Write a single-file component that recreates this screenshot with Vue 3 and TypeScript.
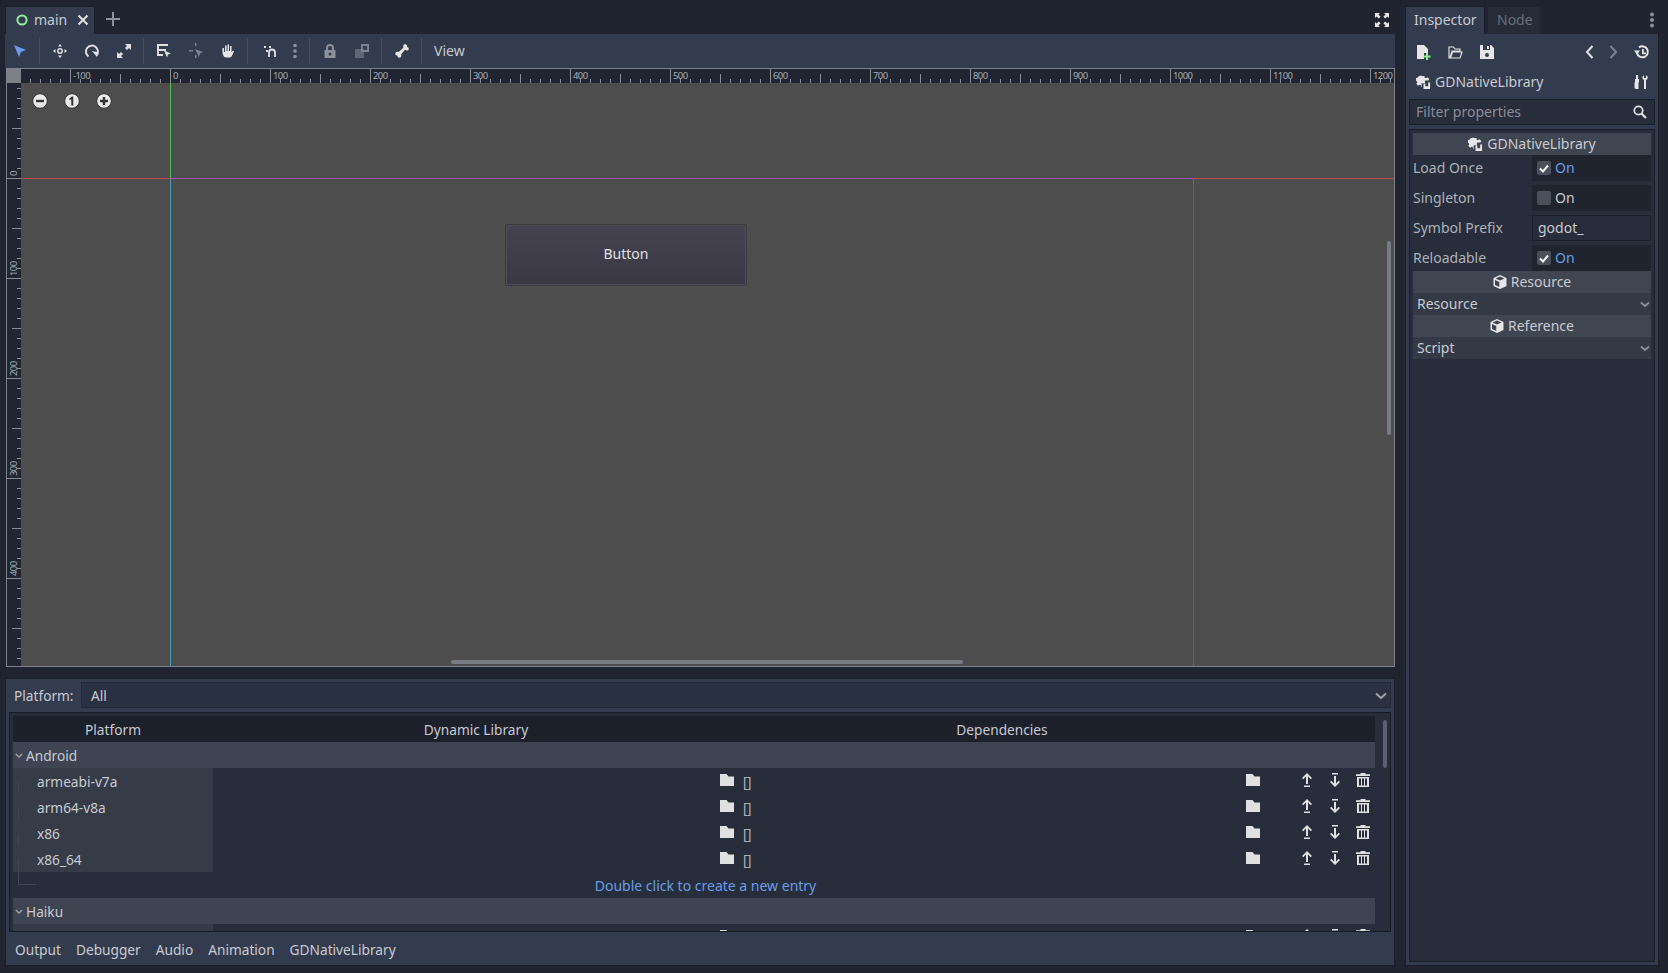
<script setup lang="ts">
const hTicks: number[] = []
for (let x = -140; x <= 1230; x += 10) hTicks.push(x)
const vTicks: number[] = []
for (let y = -90; y <= 490; y += 10) vTicks.push(y)
const hLabels: number[] = []
for (let x = -100; x <= 1200; x += 100) hLabels.push(x)
const vLabels = [0, 100, 200, 300, 400]

// length of a ruler mark, from its value
const tickLen = (v: number) => (v % 100 === 0 ? 14 : v % 50 === 0 ? 9 : 4)

const androidRows = ['armeabi-v7a', 'arm64-v8a', 'x86', 'x86_64']
</script>

<template>
  <div class="editor">
    <div class="main-col">
      <section class="scene">
        <div class="tabs">
          <div class="tab main-tab">
            <svg width="12" height="12" viewBox="0 0 12 12"><circle cx="6" cy="6" r="4.6" fill="none" stroke="#8eef97" stroke-width="2" /></svg>
            <span class="tab-name">main</span>
            <svg class="tab-x" width="12" height="12" viewBox="0 0 12 12"><path d="M1.5 1.5l9 9M10.5 1.5l-9 9" stroke="#e0e0e0" stroke-width="2" /></svg>
          </div>
          <svg class="tab-plus" width="14" height="14" viewBox="0 0 14 14"><path d="M7 0v14M0 7h14" stroke="#8d9098" stroke-width="2" /></svg>
          <svg class="fullscreen" width="14" height="14" viewBox="0 0 14 14"><path d="M0 0h5L3.4 1.6 5.6 3.8 3.8 5.6 1.6 3.4 0 5zM14 0v5l-1.6-1.6-2.2 2.2-1.8-1.8 2.2-2.2L9 0zM0 14V9l1.6 1.6 2.2-2.2 1.8 1.8-2.2 2.2L5 14zM14 14H9l1.6-1.6-2.2-2.2 1.8-1.8 2.2 2.2L14 9z" fill="#e6e6e6" /></svg>
        </div>
        <div class="toolbar">
          <svg class="ti first" viewBox="0 0 14 16"><path d="M1 2l12 5-5 2-2 5z" fill="#699ce8" /></svg>
          <i class="sep" />
          <svg class="ti" viewBox="0 0 16 16"><path d="M8 1l2 2.5H6zM8 15l2-2.5H6zM1 8l2.5-2v4zM15 8l-2.5-2v4z" fill="#e0e0e0" /><circle cx="8" cy="8" r="2.2" fill="none" stroke="#e0e0e0" stroke-width="1.5" /></svg>
          <svg class="ti" viewBox="0 0 16 16"><path d="M4.5 13.5A6 6 0 1 1 12.5 12.5" fill="none" stroke="#e0e0e0" stroke-width="2" /><path d="M8 8l5 1v5z" fill="#e0e0e0" /></svg>
          <svg class="ti" viewBox="0 0 16 16"><path d="M9 1h6v6l-2-2-2 2-2-2 2-2zM1 15V9l2 2 2-2 2 2-2 2 2 2z" fill="#e0e0e0" /></svg>
          <i class="sep" />
          <svg class="ti" viewBox="0 0 16 16"><path d="M1 1h11v2H3v3h7v2H3v3h4v2H1z" fill="#e0e0e0" /><path d="M8 7.5l7 3-3 1-1 3z" fill="#e0e0e0" /></svg>
          <svg class="ti" viewBox="0 0 16 16"><path d="M7 0h1.5v3H7zM1 7h4v1.5H1zM7 12h1.5v3H7z" fill="#7c8290" /><path d="M7 6l8 3-3 1.5-1 3.5z" fill="#7c8290" /></svg>
          <svg class="ti" viewBox="0 0 16 16"><path d="M2.5 10V5H4v4h1V2.5h1.5V8h1V1.5H9V8h1V3h1.5v6.5l1.3-2 1.3.8-2.4 5c-.4.7-1 1.2-1.8 1.2H6.5C4.5 14.5 3 13 2.5 10z" fill="#e6e6e6" /></svg>
          <i class="sep wide" />
          <svg class="ti" viewBox="0 0 16 16"><path d="M7 14V9.5a3 3 0 0 1 6 0V14" fill="none" stroke="#e0e0e0" stroke-width="1.8" /><path d="M2 3h2v2H2zM7 3h2v2H7zM4 7h2v2H4z" fill="#e0e0e0" /></svg>
          <svg class="ti dots" viewBox="0 0 16 16"><circle cx="8" cy="2.5" r="1.8" fill="#8d9098" /><circle cx="8" cy="8" r="1.8" fill="#8d9098" /><circle cx="8" cy="13.5" r="1.8" fill="#8d9098" /></svg>
          <i class="sep" />
          <svg class="ti" viewBox="0 0 16 16"><path d="M5 7V5a3 3 0 0 1 6 0v2" fill="none" stroke="#8d9098" stroke-width="2" /><path d="M2.5 7h11v8h-11z" fill="#8d9098" /><circle cx="8" cy="11" r="1.5" fill="#333c4f" /></svg>
          <svg class="ti" viewBox="0 0 16 16"><path d="M1 6h9v9H1z" fill="#5f6675" /><path d="M7 1h8v8H7zM9 3v4h4V3z" fill="#7c8290" fill-rule="evenodd" /></svg>
          <i class="sep" />
          <svg class="ti" viewBox="0 0 16 16"><path d="M10 1.5c1.5-1 4 .5 3 2.5 2 0 2.5 3 .5 3.5-1 .2-1.8-.2-2.5-.7L7 11.5c.5 1 .5 2-.3 2.7-1.5 1.2-3.7 0-3.2-1.700-1.800.3-3-2-1.500-3.300.8-.7 1.800-.6 2.700-.2L9.500 4.500c-.4-1-.4-2.300.5-3z" fill="#e6e6e6" /></svg>
          <i class="sep" />
          <span class="view-btn">View</span>
        </div>
        <div class="viewport">
          <div class="ruler-row">
            <div class="corner" />
            <svg class="h-ruler" width="1372" height="14">
              <line v-for="t in hTicks" :key="t" :x1="t + 149.5" :x2="t + 149.5" y1="14" :y2="14 - tickLen(t)" class="tick" />
              <text v-for="l in hLabels" :key="l" :x="l + 152" y="9.5" class="rule-num">{{ l }}</text>
            </svg>
          </div>
          <div class="canvas-row">
            <svg class="v-ruler" width="14" height="583">
              <line v-for="t in vTicks" :key="t" :y1="t + 95.5" :y2="t + 95.5" x1="14" :x2="14 - tickLen(t)" class="tick" />
              <text v-for="l in vLabels" :key="l" class="rule-num" :transform="`translate(9.5 ${l + 93}) rotate(-90)`">{{ l }}</text>
            </svg>
            <div class="canvas">
              <svg class="guides" width="1373" height="583">
                <line x1="0" x2="149" y1="95.5" y2="95.5" stroke="#c0494f" />
                <line x1="149" x2="1172" y1="95.5" y2="95.5" stroke="#9a55b5" />
                <line x1="1172" x2="1373" y1="95.5" y2="95.5" stroke="#c0494f" />
                <line x1="149.5" x2="149.5" y1="0" y2="95" stroke="#4fc04f" />
                <line x1="149.5" x2="149.5" y1="96" y2="583" stroke="#4f9ab0" />
                <line x1="1172.5" x2="1172.5" y1="96" y2="583" stroke="#5a5ab8" />
              </svg>
              <div class="zoom-btns">
                <svg class="zoom" viewBox="0 0 16 16"><circle cx="8" cy="8" r="7.3" fill="#eaeaea" stroke="#333" /><path d="M4 8h8" stroke="#333" stroke-width="2.4" /></svg>
                <svg class="zoom" viewBox="0 0 16 16"><circle cx="8" cy="8" r="7.3" fill="#eaeaea" stroke="#333" /><path d="M9.3 12.5V3.5H7.9L5 6l1 1 1.3-.8v6.300z" fill="#333" /></svg>
                <svg class="zoom" viewBox="0 0 16 16"><circle cx="8" cy="8" r="7.3" fill="#eaeaea" stroke="#333" /><path d="M4 8h8M8 4v8" stroke="#333" stroke-width="2.4" /></svg>
              </div>
              <div class="demo-button">Button</div>
              <div class="v-scroll" />
              <div class="h-scroll" />
            </div>
          </div>
        </div>
      </section>

      <section class="bottom">
        <div class="platform-bar">
          <span class="platform-label">Platform:</span>
          <div class="platform-select">
            <span>All</span>
            <svg width="12" height="8" viewBox="0 0 12 8"><path d="M1 1.5l5 4.500 5-4.500" fill="none" stroke="#a0a3aa" stroke-width="2" /></svg>
          </div>
        </div>
        <div class="tree">
          <div class="tree-body">
            <div class="grid-row head">
              <span>Platform</span>
              <span>Dynamic Library</span>
              <span>Dependencies</span>
              <span />
            </div>
            <div class="group">
              <svg width="8" height="6" viewBox="0 0 8 6"><path d="M.8 1l3.2 3 3.2-3" fill="none" stroke="#9a9da5" stroke-width="1.5" /></svg>
              <span>Android</span>
            </div>
            <div v-for="name in androidRows" :key="name" class="grid-row entry">
              <div class="entry-name"><i class="tree-line" />{{ name }}</div>
              <div class="entry-lib">
                <svg class="folder" viewBox="0 0 14 12"><path d="M0 0h6.5l2 2.5H14V12H0z" fill="#e0e0e0" /></svg>
              </div>
              <div class="entry-dep">
                <span class="empty-list">[]</span>
                <svg class="folder" viewBox="0 0 14 12"><path d="M0 0h6.5l2 2.5H14V12H0z" fill="#e0e0e0" /></svg>
              </div>
              <div class="entry-actions">
                <svg class="act" viewBox="0 0 14 14"><path d="M7 0l5 5-1.3 1.2L8 3.600V11H6V3.600L3.300 6.200 2 5zM4 12.500h6V14H4z" fill="#e0e0e0" /></svg>
                <svg class="act" viewBox="0 0 14 14"><path d="M4 0h6v1.500H4zM6 3h2v7.400l2.700-2.600L12 9l-5 5-5-5 1.300-1.200L6 10.400z" fill="#e0e0e0" /></svg>
                <svg class="act" viewBox="0 0 14 14"><path d="M4.500 0h5v1.200H14v1.800H0V1.200h4.500zM1 4h12v10H1zM3 5.500v7h2v-7zM6 5.500v7h2v-7zM9 5.500v7h2v-7z" fill="#e0e0e0" fill-rule="evenodd" /></svg>
              </div>
            </div>
            <div class="new-entry"><i class="tree-end" />Double click to create a new entry</div>
            <div class="group">
              <svg width="8" height="6" viewBox="0 0 8 6"><path d="M.8 1l3.2 3 3.2-3" fill="none" stroke="#9a9da5" stroke-width="1.5" /></svg>
              <span>Haiku</span>
            </div>
            <div class="grid-row entry">
              <div class="entry-name" />
              <div class="entry-lib">
                <svg class="folder" viewBox="0 0 14 12"><path d="M0 0h6.5l2 2.5H14V12H0z" fill="#e0e0e0" /></svg>
              </div>
              <div class="entry-dep">
                <span />
                <svg class="folder" viewBox="0 0 14 12"><path d="M0 0h6.5l2 2.5H14V12H0z" fill="#e0e0e0" /></svg>
              </div>
              <div class="entry-actions">
                <svg class="act" viewBox="0 0 14 14"><path d="M7 0l5 5-1.300 1.200L8 3.600V11H6V3.600L3.300 6.200 2 5z" fill="#e0e0e0" /></svg>
                <svg class="act" viewBox="0 0 14 14"><path d="M4 0h6v1.500H4z" fill="#e0e0e0" /></svg>
                <svg class="act" viewBox="0 0 14 14"><path d="M4.500 0h5v1.200H14v1.800H0V1.200h4.500z" fill="#e0e0e0" /></svg>
              </div>
            </div>
          </div>
          <div class="tree-scroll"><div class="tree-thumb" /></div>
        </div>
        <div class="bottom-tabs">
          <span>Output</span>
          <span>Debugger</span>
          <span>Audio</span>
          <span>Animation</span>
          <span>GDNativeLibrary</span>
        </div>
      </section>
    </div>

    <aside class="side">
      <div class="tabs side-tabs">
        <div class="tab insp-tab">Inspector</div>
        <div class="tab node-tab">Node</div>
        <svg class="side-dots" width="6" height="16" viewBox="0 0 6 16"><circle cx="3" cy="2.5" r="2" fill="#8d9098" /><circle cx="3" cy="8" r="2" fill="#8d9098" /><circle cx="3" cy="13.5" r="2" fill="#8d9098" /></svg>
      </div>
      <div class="side-panel">
        <div class="side-tools">
          <svg class="ti" viewBox="0 0 16 16"><path d="M2 1h7l4 4v4H9v6H2z" fill="#e6e6e6" /><path d="M11 9h2v2.5h2.5v2H13V16h-2v-2.5H8.5v-2H11z" fill="#8eef97" /></svg>
          <svg class="ti" viewBox="0 0 16 16"><path d="M2 14V3h4.500l1.500 2h5v2H5L3 14zM3.500 14L5.500 8H15l-2 6z" fill="none" stroke="#e0e0e0" stroke-width="1.2" /></svg>
          <svg class="ti" viewBox="0 0 16 16"><path d="M1 1h11l3 3v11H1zM4 1v5h7V1zM8 2h2v3H8z" fill="#e6e6e6" fill-rule="evenodd" /><circle cx="8" cy="11" r="2" fill="#333c4f" /></svg>
          <span class="spacer" />
          <svg class="ti nav" viewBox="0 0 16 16"><path d="M10.5 2L5 8l5.5 6" fill="none" stroke="#e0e0e0" stroke-width="2" /></svg>
          <svg class="ti nav" viewBox="0 0 16 16"><path d="M5.5 2L11 8l-5.500 6" fill="none" stroke="#7c8290" stroke-width="2" /></svg>
          <svg class="ti hist" viewBox="0 0 16 16"><path d="M3 9A5.500 5.500 0 1 0 5 3.500" fill="none" stroke="#e6e6e6" stroke-width="2" /><path d="M0 6.500h6L3 10.500zM8 5h1.800v3.500H12v1.800H8z" fill="#e6e6e6" /></svg>
        </div>
        <div class="side-res">
          <svg class="lib-icon" viewBox="0 0 16 16"><path d="M6 1h3l.3 1.800 1.400.6 1.500-1.100 2 2-1 1.500H9.500v3h-3.500v4H5.500l-.3-1.800-1.400-.6-1.500 1-2-2 1-1.500-.6-1.400L0 6.200v-3l1.700-.3.600-1.400L5.500.6z" fill="#e6e6e6" /><path d="M8 9h2v3h3V8h2v7H8z" fill="#e6e6e6" /></svg>
          <span>GDNativeLibrary</span>
          <span class="spacer" />
          <svg class="ti tools" viewBox="0 0 16 16"><path d="M3 1h2v4h1v3.500H5.500V15H3c-1 0-1.500-.8-1.500-1.500V8.500H2V5h1zM12 1v3h1V1.300c1.500.5 2 2 1.500 3.300-.3.700-.9 1.200-1.500 1.400V15h-2V6c-.9-.3-1.600-1.200-1.600-2.200 0-1.200.7-2.100 1.600-2.500V4h1z" fill="#e6e6e6" /></svg>
        </div>
        <div class="filter">
          <span>Filter properties</span>
          <svg width="14" height="14" viewBox="0 0 14 14"><circle cx="5.5" cy="5.5" r="4.2" fill="none" stroke="#e0e0e0" stroke-width="1.8" /><path d="M8.5 8.5L13 13" stroke="#e0e0e0" stroke-width="2.2" /></svg>
        </div>
        <div class="props">
          <div class="section-head">
            <svg class="lib-icon" viewBox="0 0 16 16"><path d="M6 1h3l.3 1.800 1.400.6 1.500-1.100 2 2-1 1.500H9.500v3h-3.500v4H5.500l-.3-1.800-1.400-.6-1.500 1-2-2 1-1.500-.6-1.400L0 6.200v-3l1.700-.3.600-1.400L5.500.6z" fill="#e6e6e6" /><path d="M8 9h2v3h3V8h2v7H8z" fill="#e6e6e6" /></svg>
            <span>GDNativeLibrary</span>
          </div>
          <div class="prop first-prop">
            <label>Load Once</label>
            <div class="value check"><span class="box"><svg width="10" height="9" viewBox="0 0 10 9"><path d="M1 4.500l3 3 5-6" fill="none" stroke="#f0f0f0" stroke-width="2" /></svg></span><span class="on">On</span></div>
          </div>
          <div class="prop">
            <label>Singleton</label>
            <div class="value check"><span class="box" /><span>On</span></div>
          </div>
          <div class="prop">
            <label>Symbol Prefix</label>
            <div class="value text-input">godot_</div>
          </div>
          <div class="prop">
            <label>Reloadable</label>
            <div class="value check"><span class="box"><svg width="10" height="9" viewBox="0 0 10 9"><path d="M1 4.500l3 3 5-6" fill="none" stroke="#f0f0f0" stroke-width="2" /></svg></span><span class="on">On</span></div>
          </div>
          <div class="section-head">
            <svg class="cube" viewBox="0 0 14 14"><path d="M7 0l6.500 3v8L7 14 .5 11V3z" fill="#e6e6e6" /><path d="M7 1.500L2.500 3.500 7 5.500l4.500-2zM6.300 7v5L2 10V5z" fill="#404552" /></svg>
            <span>Resource</span>
          </div>
          <div class="drop"><span>Resource</span><svg width="10" height="7" viewBox="0 0 10 7"><path d="M1 1.500l4 3.500 4-3.500" fill="none" stroke="#8d9098" stroke-width="1.8" /></svg></div>
          <div class="section-head">
            <svg class="cube" viewBox="0 0 14 14"><path d="M7 0l6.500 3v8L7 14 .5 11V3z" fill="#e6e6e6" /><path d="M7 1.500L2.500 3.500 7 5.500l4.500-2zM6.300 7v5L2 10V5z" fill="#404552" /></svg>
            <span>Reference</span>
          </div>
          <div class="drop"><span>Script</span><svg width="10" height="7" viewBox="0 0 10 7"><path d="M1 1.500l4 3.500 4-3.500" fill="none" stroke="#8d9098" stroke-width="1.8" /></svg></div>
        </div>
      </div>
    </aside>
  </div>
</template>

<style>
html, body { margin: 0; background: #1f2430; }
</style>

<style scoped>
.editor {
  display: flex;
  gap: 10px;
  width: 1668px;
  height: 973px;
  box-sizing: border-box;
  padding: 6px 9px 7px 5px;
  background: #1f2430;
  color: #e0e0e0;
  font-family: "Noto Sans", sans-serif;
  font-size: 14px;
  line-height: 20px;
  overflow: hidden;
}
.main-col { width: 1390px; display: flex; flex-direction: column; gap: 11px; }
.scene { height: 661px; display: flex; flex-direction: column; }
.tabs { height: 28px; display: flex; align-items: center; flex: none; }
.tab {
  height: 28px;
  box-sizing: border-box;
  display: flex;
  align-items: center;
  padding-bottom: 2px;
  background: #333c4f;
  border: 1px solid #1a1e28;
  border-bottom: 0;
  color: #c8cad0;
}
.main-tab { width: 90px; padding-left: 10px; gap: 6px; }
.tab-name { width: 36px; }
.tab-x { margin-left: 1px; }
.tab-plus { margin: -2px 0 0 11px; }
.fullscreen { margin-left: auto; margin-right: 6px; }
.toolbar {
  height: 34px;
  flex: none;
  display: flex;
  align-items: center;
  background: #333c4f;
  padding-left: 8px;
}
.ti { width: 16px; height: 16px; flex: none; margin: 0 8px; }
.ti.first { margin: 0; width: 14px; }
.ti.dots { margin: 0 3px 0 1px; }
.sep { width: 1px; height: 26px; background: #454d5f; flex: none; margin: 0 4px 0 3px; }
.ti.first + .sep { margin-left: 12px; }
.sep.wide { margin-right: 6px; }
.view-btn { margin-left: 8px; color: #c8cad0; }
.viewport {
  flex: 1;
  border: 1px solid #7d828c;
  margin-left: 1px;
  display: flex;
  flex-direction: column;
  min-height: 0;
  overflow: hidden;
  background: #4d4d4d;
}
.ruler-row { display: flex; height: 14px; flex: none; }
.corner { width: 14px; background: #7e8088; flex: none; }
.h-ruler { background: #202531; display: block; flex: 1; }
.canvas-row { display: flex; flex: 1; min-height: 0; }
.v-ruler { background: #202531; display: block; flex: none; overflow: visible; }
.tick { stroke: #8a8e96; stroke-width: 1; }
.rule-num { fill: #a8abb2; font-size: 9.5px; letter-spacing: -0.6px; font-family: "Noto Sans", sans-serif; }
.canvas { position: relative; flex: 1; background: #4d4d4d; overflow: hidden; }
.guides { position: absolute; left: 0; top: 0; }
.zoom-btns { position: absolute; left: 11px; top: 10px; display: flex; gap: 16px; }
.zoom { width: 16px; height: 16px; display: block; }
.demo-button {
  position: absolute;
  left: 485px;
  top: 142px;
  width: 240px;
  height: 60px;
  box-sizing: border-box;
  display: flex;
  align-items: center;
  justify-content: center;
  background: linear-gradient(#45434f, #3a3845);
  border: 1px solid #4d4c57;
  border-radius: 2px;
  box-shadow: 0 0 0 1px #3a3a3f;
  font-size: 14px;
  padding-bottom: 2px;
}
.v-scroll { position: absolute; right: 3px; top: 158px; width: 4px; height: 194px; background: #777b84; border-radius: 2px; }
.h-scroll { position: absolute; left: 430px; bottom: 2px; width: 512px; height: 4px; background: #777b84; border-radius: 2px; }

.bottom {
  height: 288px;
  box-sizing: border-box;
  background: #333c4f;
  border: 1px solid #1a1e28;
  padding: 3px 3px 0 3px;
  display: flex;
  flex-direction: column;
  font-size: 13.7px;
}
.platform-bar { display: flex; align-items: center; height: 26px; flex: none; }
.platform-label { width: 72px; padding: 2px 0 0 5px; box-sizing: border-box; color: #c8cad0; }
.platform-select {
  flex: 1;
  height: 26px;
  box-sizing: border-box;
  background: #2a3142;
  border: 1px solid #232936;
  display: flex;
  align-items: center;
  justify-content: space-between;
  padding: 2px 3px 0 9px;
  color: #c8cad0;
}
.tree {
  margin-top: 4px;
  height: 220px;
  flex: none;
  box-sizing: border-box;
  background: #272d3b;
  border: 1px solid #161a22;
  padding: 3px 3px 0 3px;
  display: flex;
  overflow: hidden;
}
.tree-body { width: 1362px; flex: none; overflow: hidden; }
.grid-row { display: grid; grid-template-columns: 200px 526px 526px 1fr; height: 26px; box-sizing: border-box; align-items: center; }
.head { background: #1c202b; text-align: center; color: #c8cad0; padding-top: 2px; }
.group {
  height: 26px;
  box-sizing: border-box;
  background: #3e4451;
  display: flex;
  align-items: center;
  gap: 3px;
  padding: 2px 0 0 2px;
  color: #c8cad0;
}
.entry-name {
  position: relative;
  height: 26px;
  line-height: 28px;
  background: #363b48;
  padding-left: 24px;
  color: #c8cad0;
}
.tree-line { position: absolute; left: 5px; top: 14px; width: 1px; height: 11px; background: #3f4553; }
.entry:nth-child(6) .tree-line { top: 12px; height: 14px; }
.entry-lib { display: flex; justify-content: flex-end; padding-right: 5px; }
.entry-dep { display: flex; justify-content: space-between; align-items: center; padding: 0 5px 0 4px; color: #b0b3ba; }
.folder { width: 14px; height: 12px; display: block; margin-top: -2px; }
.empty-list { letter-spacing: -0.5px; padding-top: 2px; }
.entry-actions { display: flex; justify-content: flex-end; gap: 14px; padding-right: 5px; margin-top: -2px; }
.act { width: 14px; height: 14px; display: block; }
.new-entry {
  position: relative;
  height: 26px;
  line-height: 28px;
  text-align: center;
  padding-left: 23px;
  color: #699ce8;
  font-size: 14px;
}
.tree-end {
  position: absolute;
  left: 5px;
  top: 0;
  width: 18px;
  height: 13px;
  box-sizing: border-box;
  border: 1px solid #3f4553;
  border-width: 0 0 1px 1px;
}
.tree-scroll { flex: 1; padding: 4px 0 0 8px; }
.tree-thumb { width: 4px; height: 48px; background: #5a6070; border-radius: 2px; }
.bottom-tabs { flex: 1; display: flex; align-items: center; gap: 15px; padding: 2px 0 0 6px; color: #c8cad0; }

.side { flex: 1; display: flex; flex-direction: column; min-width: 0; }
.side-tabs { gap: 2px; }
.insp-tab { width: 80px; padding-left: 8px; flex: none; }
.node-tab { width: 54px; padding-left: 9px; background: #262b38; color: #6c707a; border-color: #1f2430; }
.side-dots { margin-left: auto; margin-right: 4px; }
.side-panel {
  flex: 1;
  min-height: 0;
  background: #333c4f;
  border: 1px solid #1a1e28;
  border-top: 0;
  padding: 0 3px 3px;
  display: flex;
  flex-direction: column;
}
.side-tools { height: 36px; display: flex; align-items: center; flex: none; margin-left: -2px; }
.side-tools .ti { margin: 0 8px; }
.side-tools .ti.nav { margin: 0 3.5px; }
.side-tools .ti.hist { margin: 0 5px 0 10px; }
.spacer { flex: 1; }
.side-res { height: 24px; display: flex; align-items: center; flex: none; padding-left: 7px; gap: 4px; color: #c8cad0; }
.side-res .tools { margin: 0 6px 0 0; }
.lib-icon { width: 15px; height: 15px; flex: none; }
.cube { width: 14px; height: 14px; flex: none; }
.filter {
  height: 26px;
  flex: none;
  margin-top: 5px;
  box-sizing: border-box;
  background: #272d3b;
  border: 1px solid #1a1e28;
  display: flex;
  align-items: center;
  justify-content: space-between;
  padding: 0 7px 0 6px;
  color: #8a8e96;
}
.props {
  flex: 1;
  margin-top: 4px;
  background: #272d3b;
  border: 1px solid #1a1e28;
  padding: 3px;
  min-height: 0;
}
.section-head {
  height: 22px;
  background: #404552;
  display: flex;
  align-items: center;
  justify-content: center;
  gap: 4px;
  color: #c8cad0;
}
.prop { display: flex; height: 26px; margin-top: 4px; align-items: stretch; }
.first-prop { margin-top: 0; }
.prop label { width: 119px; line-height: 26px; color: #aeb1b8; flex: none; }
.value { flex: 1; box-sizing: border-box; }
.check { background: #20242f; display: flex; align-items: center; gap: 4px; padding-left: 5px; color: #c8cad0; }
.box { width: 14px; height: 14px; border-radius: 2px; background: #4a4f5c; display: flex; align-items: center; justify-content: center; }
.on { color: #699ce8; }
.text-input { background: #272d3b; border: 1px solid #1a1e28; padding-left: 5px; line-height: 24px; color: #c8cad0; }
.drop {
  height: 22px;
  background: #343946;
  display: flex;
  align-items: center;
  justify-content: space-between;
  padding: 0 1px 0 4px;
  color: #c8cad0;
}
</style>
